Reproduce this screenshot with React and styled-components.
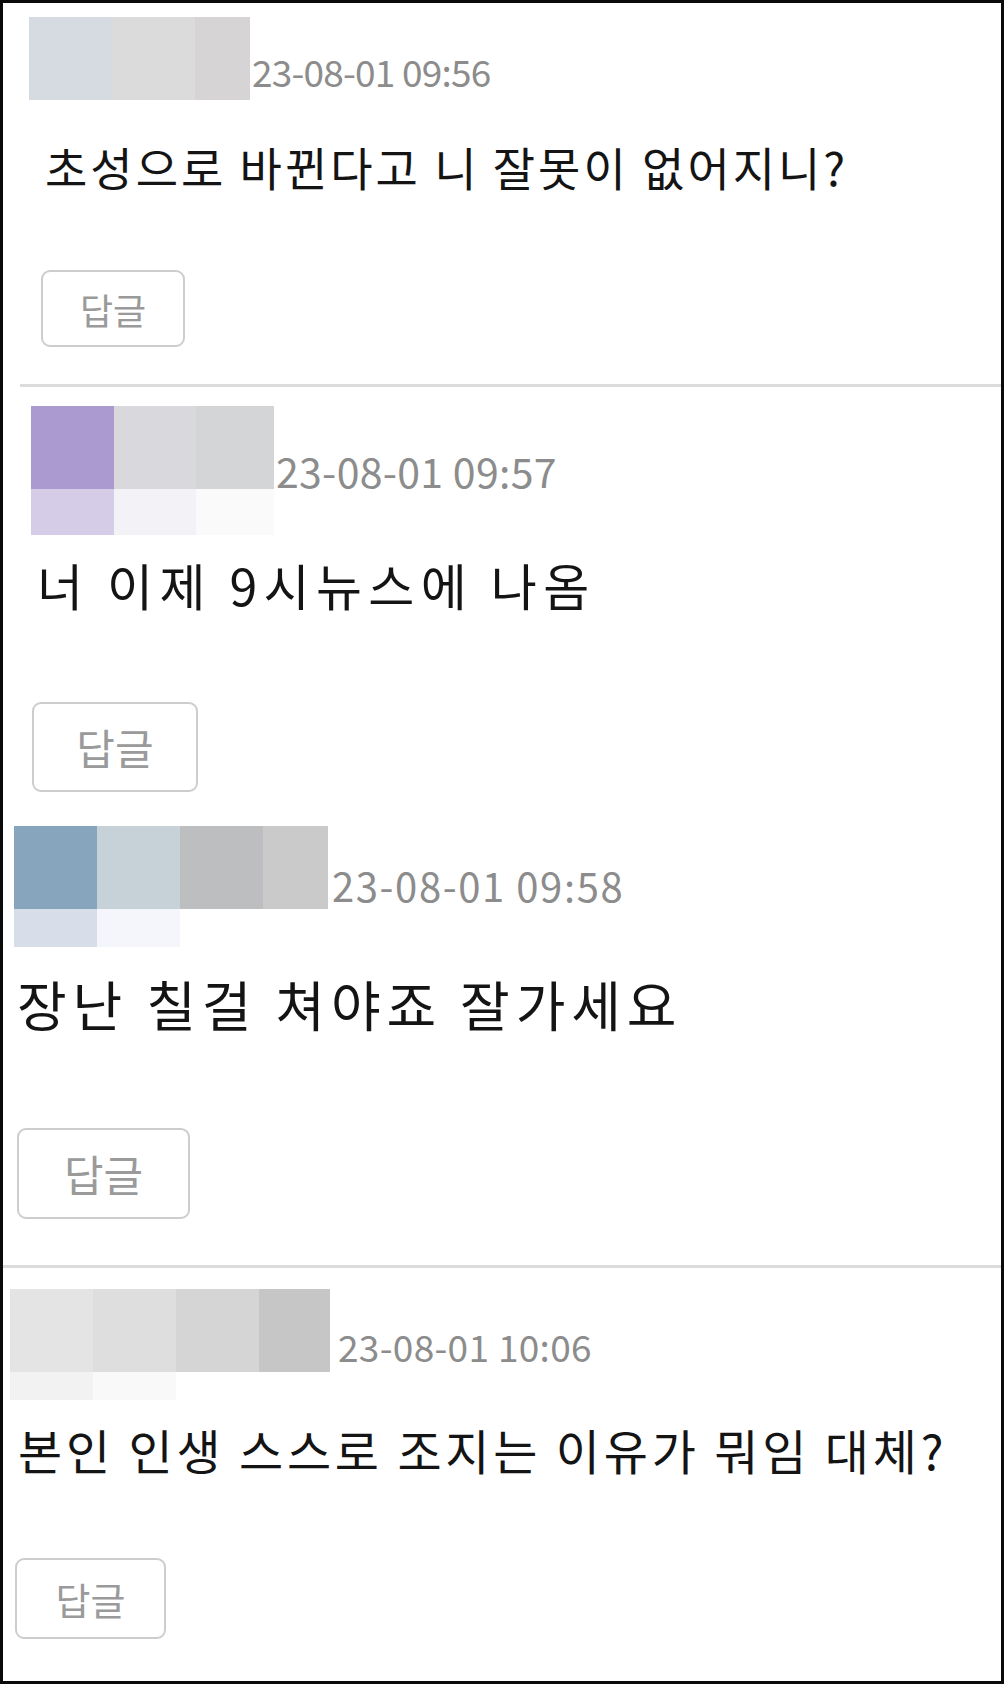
import React from "react";
import styled, { createGlobalStyle } from "styled-components";

const GlobalStyle = createGlobalStyle`
  html, body {
    margin: 0;
    padding: 0;
    background: #ffffff;
  }
  body {
    font-family: "Noto Sans CJK KR", "Noto Sans", sans-serif;
  }
`;

const Frame = styled.div`
  box-sizing: border-box;
  width: 1004px;
  height: 1684px;
  border: 3px solid #0a0a0a;
  background: #ffffff;
  display: flex;
  flex-direction: column;
  overflow: hidden;
`;

const CommentBox = styled.section`
  display: flex;
  flex-direction: column;
  align-items: flex-start;
  padding: ${(p) => p.$pt}px 0 ${(p) => p.$pb}px ${(p) => p.$pl}px;
`;

const Header = styled.div`
  display: flex;
  align-items: flex-start;
`;

const Avatar = styled.div`
  display: flex;
  flex-direction: column;
`;

const PixelRow = styled.div`
  display: flex;
  height: ${(p) => p.$h}px;
`;

const Pixel = styled.span`
  display: block;
  width: ${(p) => p.$w}px;
  height: 100%;
  background: ${(p) => p.$c};
`;

const DateText = styled.span`
  font-size: ${(p) => p.$fs}px;
  line-height: 1;
  letter-spacing: ${(p) => p.$ls}px;
  color: #8c8c8c;
  margin-top: ${(p) => p.$mt}px;
  margin-left: ${(p) => p.$ml}px;
  white-space: nowrap;
`;

const Body = styled.p`
  margin: ${(p) => p.$mt}px 0 0 ${(p) => p.$ml}px;
  font-size: ${(p) => p.$fs}px;
  line-height: 1;
  letter-spacing: ${(p) => p.$ls}px;
  color: #141414;
  white-space: nowrap;
`;

const ReplyButton = styled.button`
  box-sizing: border-box;
  width: ${(p) => p.$w}px;
  height: ${(p) => p.$h}px;
  margin: ${(p) => p.$mt}px 0 0 ${(p) => p.$ml}px;
  padding: 0;
  border: 2px solid #cdcdcd;
  border-radius: 9px;
  background: #ffffff;
  color: #9a9a9a;
  font-family: "Noto Sans CJK KR", "Noto Sans", sans-serif;
  font-size: ${(p) => p.$fs}px;
  line-height: 1;
  display: flex;
  align-items: center;
  justify-content: center;
  cursor: pointer;
`;

const Divider = styled.hr`
  flex-shrink: 0;
  margin: 0 0 0 ${(p) => p.$inset}px;
  height: 3px;
  border: none;
  background: #dcdcdc;
`;

const comments = [
  {
    id: 1,
    pad: { pt: 14, pl: 26, pb: 37 },
    avatar: [
      { h: 83, cells: [["#d6dbe1", 84], ["#dbdbdb", 82], ["#d6d4d5", 55]] },
    ],
    date: { text: "23-08-01 09:56", fs: 37, ls: -0.8, mt: 36, ml: 2 },
    body: { text: "초성으로 바뀐다고 니 잘못이 없어지니?", fs: 46, ls: 3, mt: 43, ml: 16 },
    button: { w: 144, h: 77, fs: 36, mt: 81, ml: 12 },
  },
  {
    id: 2,
    pad: { pt: 19, pl: 28, pb: 0 },
    avatar: [
      { h: 83, cells: [["#ab9ad0", 83], ["#d9d8dd", 82], ["#d4d5d7", 78]] },
      { h: 46, cells: [["#d5cde8", 83], ["#f3f2f6", 82], ["#fafafb", 78]] },
    ],
    date: { text: "23-08-01 09:57", fs: 41, ls: 0.3, mt: 44, ml: 2 },
    body: { text: "너 이제 9시뉴스에 나옴", fs: 50, ls: 6.4, mt: 24, ml: 6 },
    button: { w: 166, h: 90, fs: 42, mt: 93, ml: 1 },
  },
  {
    id: 3,
    pad: { pt: 34, pl: 11, pb: 46 },
    avatar: [
      { h: 83, cells: [["#87a5bd", 83], ["#c6d1d8", 83], ["#bdbec0", 83], ["#cbcacb", 65]] },
      { h: 38, cells: [["#d8dee9", 83], ["#f5f6fb", 83]] },
    ],
    date: { text: "23-08-01 09:58", fs: 40, ls: 1.6, mt: 39, ml: 4 },
    body: { text: "장난 칠걸 쳐야죠 잘가세요", fs: 54, ls: 5.9, mt: 30, ml: 3 },
    button: { w: 173, h: 91, fs: 43, mt: 97, ml: 3 },
  },
  {
    id: 4,
    pad: { pt: 21, pl: 7, pb: 0 },
    avatar: [
      { h: 83, cells: [["#e4e4e4", 83], ["#dedede", 83], ["#d5d5d5", 83], ["#c6c6c6", 71]] },
      { h: 28, cells: [["#f2f2f2", 83], ["#f9f9f9", 83]] },
    ],
    date: { text: "23-08-01 10:06", fs: 37, ls: 0.3, mt: 39, ml: 8 },
    body: { text: "본인 인생 스스로 조지는 이유가 뭐임 대체?", fs: 48, ls: 3.8, mt: 25, ml: 8 },
    button: { w: 151, h: 81, fs: 38, mt: 85, ml: 5 },
  },
];

const Comment = ({ c }) => (
  <CommentBox $pt={c.pad.pt} $pl={c.pad.pl} $pb={c.pad.pb}>
    <Header>
      <Avatar>
        {c.avatar.map((row, i) => (
          <PixelRow key={i} $h={row.h}>
            {row.cells.map(([color, w], j) => (
              <Pixel key={j} $w={w} $c={color} />
            ))}
          </PixelRow>
        ))}
      </Avatar>
      <DateText $fs={c.date.fs} $ls={c.date.ls} $mt={c.date.mt} $ml={c.date.ml}>
        {c.date.text}
      </DateText>
    </Header>
    <Body $fs={c.body.fs} $ls={c.body.ls} $mt={c.body.mt} $ml={c.body.ml}>
      {c.body.text}
    </Body>
    <ReplyButton
      $w={c.button.w}
      $h={c.button.h}
      $fs={c.button.fs}
      $mt={c.button.mt}
      $ml={c.button.ml}
    >
      답글
    </ReplyButton>
  </CommentBox>
);

export default function App() {
  return (
    <>
      <GlobalStyle />
      <Frame>
        <Comment c={comments[0]} />
        <Divider $inset={17} />
        <Comment c={comments[1]} />
        <Comment c={comments[2]} />
        <Divider $inset={0} />
        <Comment c={comments[3]} />
      </Frame>
    </>
  );
}
